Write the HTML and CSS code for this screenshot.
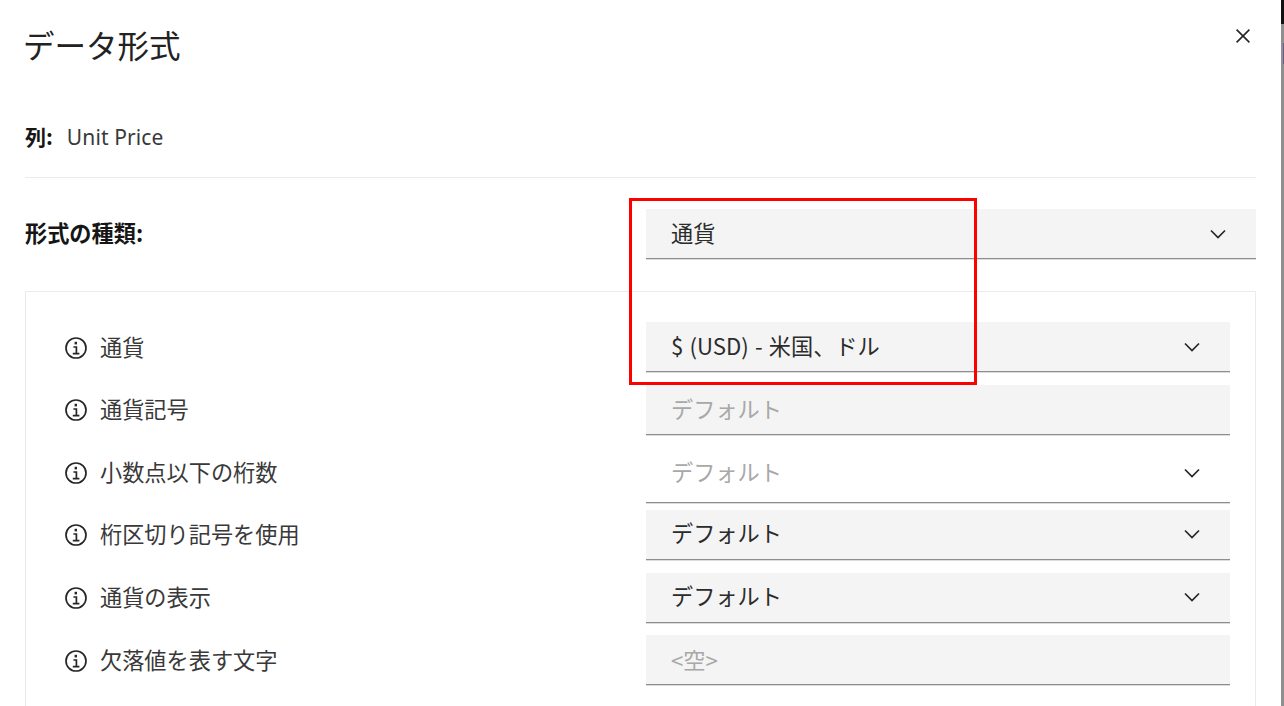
FILE: index.html
```html
<!DOCTYPE html>
<html lang="ja">
<head>
<meta charset="utf-8">
<title>データ形式</title>
<link rel="stylesheet" href="styles.css">
</head>
<body>
<div class="dialog">
  <header class="head">
    <h1 class="title">データ形式</h1>
    <svg class="close" viewBox="0 0 14 14"><path d="M.6.6l12.8 12.8M13.4.6L.6 13.4"/></svg>
  </header>
  <p class="column"><b>列:</b><span>Unit Price</span></p>
  <div class="type-row">
    <b class="type-label">形式の種類:</b>
    <div class="field select"><span>通貨</span><svg class="chev" viewBox="0 0 16 10"><path d="M1 1.5l7 7 7-7"/></svg></div>
  </div>
  <section class="panel">
    <div class="row">
      <label class="lab"><svg class="info" viewBox="0 0 22 22"><circle cx="11" cy="11" r="10"/><path class="dot" d="M9.6 4.8h2.4v2.6H9.6z"/><path d="M8.4 10h3v6.6M7.8 16.6h6.6"/></svg>通貨</label>
      <div class="field select"><span>$ (USD) - 米国、ドル</span><svg class="chev" viewBox="0 0 16 10"><path d="M1 1.5l7 7 7-7"/></svg></div>
    </div>
    <div class="row">
      <label class="lab"><svg class="info" viewBox="0 0 22 22"><circle cx="11" cy="11" r="10"/><path class="dot" d="M9.6 4.8h2.4v2.6H9.6z"/><path d="M8.4 10h3v6.6M7.8 16.6h6.6"/></svg>通貨記号</label>
      <div class="field ph"><span>デフォルト</span></div>
    </div>
    <div class="row tall">
      <label class="lab"><svg class="info" viewBox="0 0 22 22"><circle cx="11" cy="11" r="10"/><path class="dot" d="M9.6 4.8h2.4v2.6H9.6z"/><path d="M8.4 10h3v6.6M7.8 16.6h6.6"/></svg>小数点以下の桁数</label>
      <div class="field select ph off"><span>デフォルト</span><svg class="chev" viewBox="0 0 16 10"><path d="M1 1.5l7 7 7-7"/></svg></div>
    </div>
    <div class="row">
      <label class="lab"><svg class="info" viewBox="0 0 22 22"><circle cx="11" cy="11" r="10"/><path class="dot" d="M9.6 4.8h2.4v2.6H9.6z"/><path d="M8.4 10h3v6.6M7.8 16.6h6.6"/></svg>桁区切り記号を使用</label>
      <div class="field select"><span>デフォルト</span><svg class="chev" viewBox="0 0 16 10"><path d="M1 1.5l7 7 7-7"/></svg></div>
    </div>
    <div class="row">
      <label class="lab"><svg class="info" viewBox="0 0 22 22"><circle cx="11" cy="11" r="10"/><path class="dot" d="M9.6 4.8h2.4v2.6H9.6z"/><path d="M8.4 10h3v6.6M7.8 16.6h6.6"/></svg>通貨の表示</label>
      <div class="field select"><span>デフォルト</span><svg class="chev" viewBox="0 0 16 10"><path d="M1 1.5l7 7 7-7"/></svg></div>
    </div>
    <div class="row">
      <label class="lab"><svg class="info" viewBox="0 0 22 22"><circle cx="11" cy="11" r="10"/><path class="dot" d="M9.6 4.8h2.4v2.6H9.6z"/><path d="M8.4 10h3v6.6M7.8 16.6h6.6"/></svg>欠落値を表す文字</label>
      <div class="field ph"><span>&lt;空&gt;</span></div>
    </div>
  </section>
  <div class="highlight"></div>
</div>
<div class="edge"></div>
</body>
</html>
```
FILE: styles.css
```css
* { box-sizing: border-box; }
html, body { margin: 0; height: 100%; }
body {
  display: flex;
  width: 1284px;
  height: 706px;
  overflow: hidden;
  background: #fff;
  color: #1f1f1f;
  font-family: "Noto Sans CJK JP", "Noto Sans", sans-serif;
  font-size: 22.2px;
}
.dialog {
  position: relative;
  flex: 1;
  padding: 0 25px;
  overflow: hidden;
}
.head {
  display: flex;
  justify-content: space-between;
  height: 90px;
  padding-top: 21px;
}
.title {
  margin: 0 0 0 -2px;
  font-size: 31.5px;
  font-weight: 400;
  line-height: 46px;
  color: #222;
}
.close {
  width: 14px;
  height: 14px;
  margin: 8px 6px 0 0;
  fill: none;
  stroke: #262626;
  stroke-width: 1.6;
}
.column {
  display: flex;
  gap: 14px;
  height: 88px;
  margin: 0;
  padding-top: 32px;
  border-bottom: 1px solid #ebebeb;
  font-size: 21px;
  line-height: 30px;
  color: #393939;
}
.column b { margin-top: -1px; color: #161616; }
.column span { font-family: "Noto Sans", sans-serif; letter-spacing: .12px; }
.type-row {
  display: flex;
  justify-content: space-between;
  align-items: center;
  margin-top: 31px;
}
.type-label { color: #161616; line-height: 46px; padding-bottom: 4px; }
.type-row .field { width: 610px; }
.field {
  display: flex;
  align-items: center;
  justify-content: space-between;
  flex: none;
  width: 584px;
  height: 50px;
  padding: 0 30px 2px 25px;
  background: #f4f4f4;
  border-bottom: 1px solid #8d8d8d;
  box-shadow: 0 1px 0 #dcdcdc;
  line-height: 44px;
  word-spacing: 1.2px;
  color: #2b2b2b;
}
.select { padding-bottom: 4px; }
.ph { color: #a8a8a8; }
.off { background: #fff; }
.chev {
  width: 16px;
  height: 10px;
  margin-top: 4px;
  fill: none;
  stroke: #262626;
  stroke-width: 1.7;
}
.panel {
  display: flex;
  flex-direction: column;
  gap: 12.67px;
  margin-top: 32px;
  height: 440px;
  padding: 30px 25px 0 39px;
  border: 1px solid #ebebeb;
  border-bottom: 0;
}
.row {
  display: flex;
  justify-content: space-between;
  align-items: flex-start;
  height: 50px;
}
.row.tall .field { height: 56px; padding-bottom: 8px; }
.lab {
  display: flex;
  align-items: center;
  gap: 13px;
  height: 50px;
  padding-bottom: 3px;
  line-height: 44px;
  color: #393939;
}
.info {
  flex: none;
  width: 22px;
  height: 22px;
  margin-top: 4px;
  fill: none;
  stroke: #262626;
  stroke-width: 1.7;
}
.info .dot { fill: #262626; stroke: none; }
.highlight {
  position: absolute;
  left: 629px;
  top: 198px;
  width: 348px;
  height: 187px;
  border: 3px solid #ff0000;
  pointer-events: none;
}
.edge {
  flex: 0 0 3px;
  background:
    linear-gradient(#6a5a96, #6a5a96) right 43px / 1px 21px no-repeat,
    linear-gradient(#111 0, #111 24px, #8f8f8f 24px);
}
```
